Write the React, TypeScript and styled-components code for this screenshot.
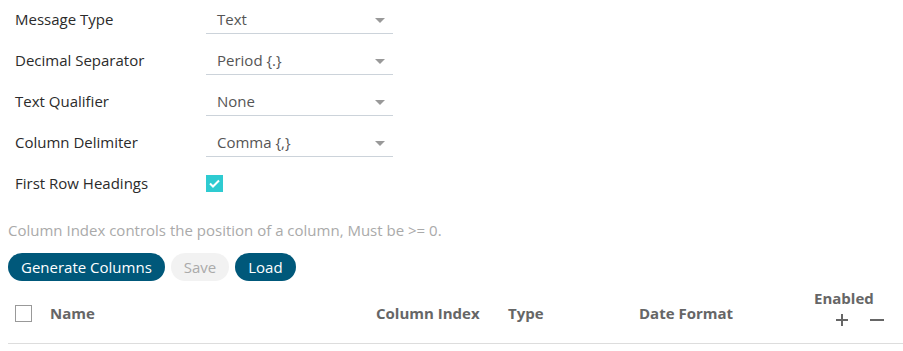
import React from 'react';
import styled, { createGlobalStyle } from 'styled-components';

const GlobalStyle = createGlobalStyle`
    body {
        margin: 0;
        background: #fff;
        font-family: "Open Sans", "Noto Sans", sans-serif;
        font-size: 15px;
        color: #333;
    }
`;

const Page = styled.div`
    width: 903px;
    padding: 0 0 0 8px;
    box-sizing: border-box;
`;

const Form = styled.div`
    padding-left: 7px;
`;

const Row = styled.div`
    display: flex;
    height: 41px;
`;

const Label = styled.div`
    width: 191px;
    padding-top: 9px;
    line-height: 21px;
    color: #2b2b2b;
`;

const Select = styled.div`
    width: 187px;
    height: 34px;
    box-sizing: border-box;
    border-bottom: 1px solid #ccd3da;
    padding: 9px 0 0 11px;
    line-height: 21px;
    color: #555;
    display: flex;
    justify-content: space-between;
`;

const Caret = styled.span`
    width: 0;
    height: 0;
    margin: 9px 8px 0 0;
    border-left: 5px solid transparent;
    border-right: 5px solid transparent;
    border-top: 5px solid #999;
`;

const CheckCell = styled.div`
    padding-top: 11px;
`;

const Checkbox = styled.span<{ $checked?: boolean }>`
    display: flex;
    align-items: center;
    justify-content: center;
    width: 17px;
    height: 17px;
    box-sizing: border-box;
    background: ${p => (p.$checked ? '#2ecbd1' : '#fff')};
    border: ${p => (p.$checked ? 'none' : '1px solid #999')};
`;

const Help = styled.div`
    margin-top: 15px;
    line-height: 21px;
    color: #aaa;
`;

const Toolbar = styled.div`
    display: flex;
    gap: 6px;
    margin-top: 12px;
`;

const Button = styled.button<{ $disabled?: boolean }>`
    height: 28px;
    padding: 0 13px;
    border: none;
    border-radius: 14px;
    font-family: inherit;
    font-size: 15px;
    background: ${p => (p.$disabled ? '#f2f2f2' : '#00587a')};
    color: ${p => (p.$disabled ? '#aaa' : '#fff')};
`;

const Table = styled.div`
    display: grid;
    grid-template-columns: 42px 326px 132px 131px 175px 1fr;
    height: 62px;
    border-bottom: 1px solid #ddd;
`;

const HeadCell = styled.div`
    display: flex;
    align-items: center;
    padding-top: 2px;
    font-weight: 700;
    color: #666;
`;

const BoxCell = styled.div`
    display: flex;
    align-items: center;
    padding: 2px 0 0 7px;
`;

const EnabledCell = styled.div`
    display: flex;
    flex-direction: column;
    font-weight: 700;
    color: #666;
    line-height: 21px;
`;

const EnabledTitle = styled.span`
    margin-top: 7px;
`;

const Icons = styled.div`
    display: flex;
    gap: 21px;
    padding: 4px 0 0 21px;
`;

const fields = [
    { label: 'Message Type', value: 'Text' },
    { label: 'Decimal Separator', value: 'Period {.}' },
    { label: 'Text Qualifier', value: 'None' },
    { label: 'Column Delimiter', value: 'Comma {,}' },
];

export default function App() {
    return (
        <Page>
            <GlobalStyle />
            <Form>
                {fields.map(f => (
                    <Row key={f.label}>
                        <Label>{f.label}</Label>
                        <Select>
                            {f.value}
                            <Caret />
                        </Select>
                    </Row>
                ))}
                <Row>
                    <Label>First Row Headings</Label>
                    <CheckCell>
                        <Checkbox $checked>
                            <svg width="11" height="9" viewBox="0 0 11 9">
                                <path d="M1 4.5 L4 7.5 L10 1.5" fill="none" stroke="#fff" strokeWidth="2" />
                            </svg>
                        </Checkbox>
                    </CheckCell>
                </Row>
            </Form>
            <Help>Column Index controls the position of a column, Must be &gt;= 0.</Help>
            <Toolbar>
                <Button>Generate Columns</Button>
                <Button $disabled>Save</Button>
                <Button>Load</Button>
            </Toolbar>
            <Table>
                <BoxCell>
                    <Checkbox />
                </BoxCell>
                <HeadCell>Name</HeadCell>
                <HeadCell>Column Index</HeadCell>
                <HeadCell>Type</HeadCell>
                <HeadCell>Date Format</HeadCell>
                <EnabledCell>
                    <EnabledTitle>Enabled</EnabledTitle>
                    <Icons>
                        <svg width="14" height="14" viewBox="0 0 14 14">
                            <path d="M7 1 V13 M1 7 H13" stroke="#666" strokeWidth="2" />
                        </svg>
                        <svg width="14" height="14" viewBox="0 0 14 14">
                            <path d="M0 7 H14" stroke="#666" strokeWidth="2" />
                        </svg>
                    </Icons>
                </EnabledCell>
            </Table>
        </Page>
    );
}
